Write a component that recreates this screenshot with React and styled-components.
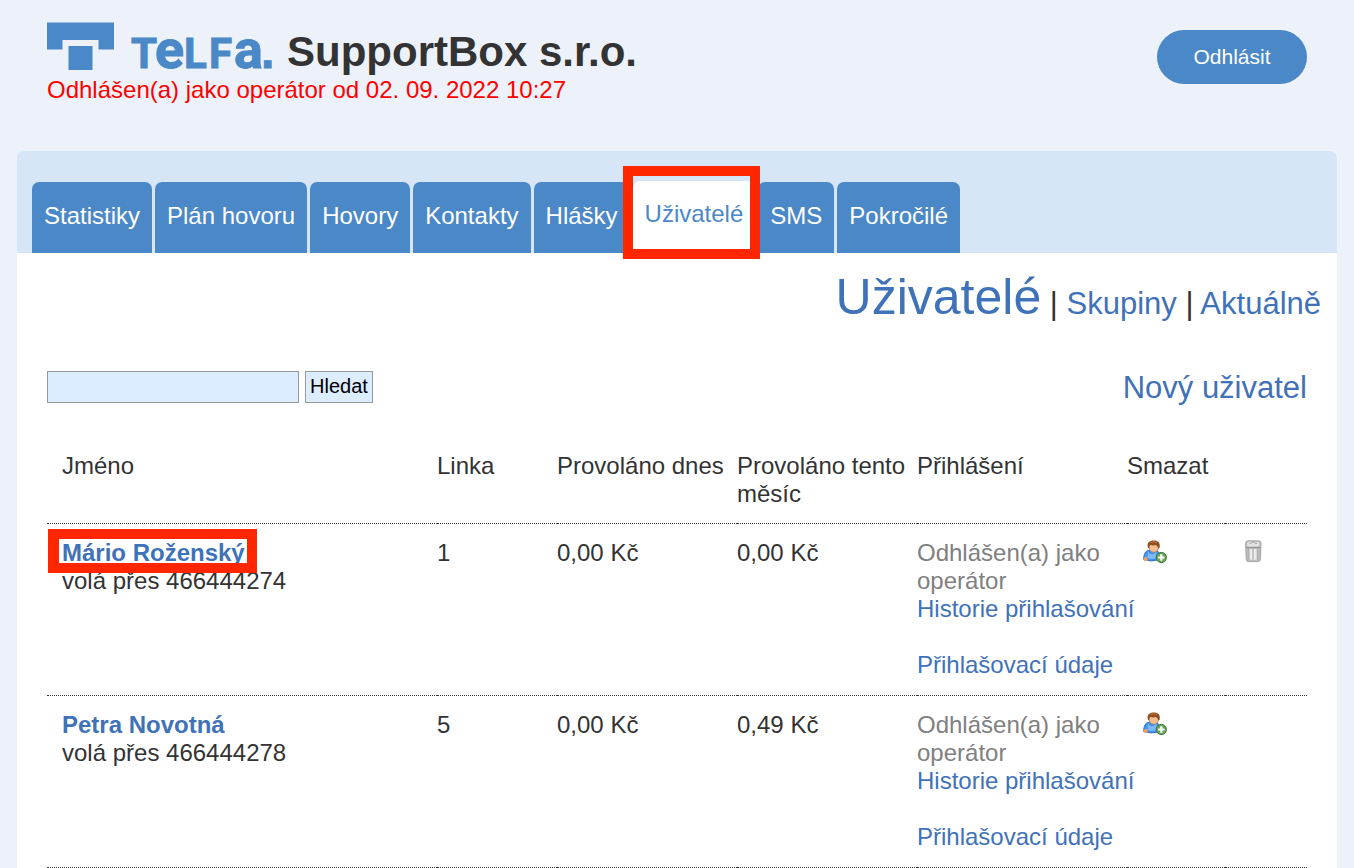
import React, { useState } from "react";
import styled, { createGlobalStyle } from "styled-components";

const tabs = ["Statistiky", "Plán hovoru", "Hovory", "Kontakty", "Hlášky", "Uživatelé", "SMS", "Pokročilé"];

const users = [
  { name: "Mário Roženský", phone: "466444274", line: "1", today: "0,00 Kč", month: "0,00 Kč", marked: true, removable: true },
  { name: "Petra Novotná", phone: "466444278", line: "5", today: "0,00 Kč", month: "0,49 Kč" },
];

const TelfaLogo = () => (
  <LogoSvg width="228" height="48" viewBox="0 0 228 48" role="img" aria-label="Telfa">
    <path d="M0 0.5H67V27.500H51.500V18H15.500V27.500H0Z" />
    <rect x="21.500" y="24" width="24" height="24" />
    <LogoText y="46" fontSize="42">
      <tspan x="84">T</tspan>
      <tspan x="108" fontSize="54">e</tspan>
      <tspan x="137">L</tspan>
      <tspan x="162">F</tspan>
      <tspan x="187" fontSize="54">a</tspan>
      <LogoDot x="214" fontSize="48">.</LogoDot>
    </LogoText>
  </LogoSvg>
);

const AddUserIcon = () => (
  <IconSvg width="24" height="24" viewBox="0 0 24 24" aria-hidden="true">
    <path d="M0.600 19.500C0.600 14 2.500 10.500 6 10.300H12C15.500 10.500 17 13 17 19.500Q8 22.500 0.600 19.500Z" fill="#4292ee" stroke="#2a67bd" strokeWidth="0.8" />
    <path d="M5 11.500Q8.500 17 13.500 11.500L13 18Q8 20 4.500 18Z" fill="#7cb9fa" />
    <path d="M0.600 18.500Q1.500 15.500 4.500 17.500V21H1.200Z" fill="#e9a06c" />
    <ellipse cx="10.800" cy="7" rx="4.800" ry="5.200" fill="#f3bf90" stroke="#b4764a" strokeWidth="0.7" />
    <path d="M4.800 7.500C3.800 2.500 6.500 0.500 10.800 0.500C15.500 0.500 17.600 3 16.600 7.800L15.200 8.500Q14.800 5.500 12.800 5Q9.500 6 7 4.800Q6.200 6.500 6.200 8.500Z" fill="#8f4d20" />
    <path d="M7.500 2.500Q10.500 1 14 2.500" stroke="#c07a45" strokeWidth="1" fill="none" />
    <circle cx="18.300" cy="17.500" r="5.100" fill="#68a558" stroke="#39742e" strokeWidth="1" />
    <path d="M18.300 14.300V20.700M15.100 17.500H21.500" stroke="#fff" strokeWidth="2.200" />
  </IconSvg>
);

const TrashIcon = () => (
  <IconSvg width="24" height="24" viewBox="0 0 24 24" aria-hidden="true">
    <path d="M4.500 3Q4.800 0.800 7 0.800H17.500Q19.800 0.800 20 3L19.500 19.500Q19.300 21.600 17 21.600H7.500Q5.400 21.600 5.200 19.500Z" fill="#bdbdbd" stroke="#999" strokeWidth="0.8" />
    <rect x="6" y="1.800" width="12.500" height="4.600" rx="2" fill="#e2e2e2" />
    <path d="M8.500 3.200H10.500M14 3.200H16M10.800 2.200H13.600" stroke="#8f8f8f" strokeWidth="0.9" />
    <path d="M5 7.600H19.500" stroke="#8f8f8f" strokeWidth="1" />
    <rect x="7.500" y="9" width="9.500" height="11" fill="#d8d8d8" />
    <path d="M10.300 9V19.500M13.800 9V19.500" stroke="#f4f4f4" strokeWidth="1.500" />
    <path d="M7.800 8.500V20M12 9V19.500M16.600 8.500V20" stroke="#a2a2a2" strokeWidth="0.8" />
  </IconSvg>
);

const App = () => {
  const [query, setQuery] = useState("");

  return (
    <Page>
      <GlobalStyle />
      <Header>
        <div>
          <Brand>
            <TelfaLogo />
            <Company>SupportBox s.r.o.</Company>
          </Brand>
          <Status>Odhlášen(a) jako operátor od 02. 09. 2022 10:27</Status>
        </div>
        <LogoutButton type="button">Odhlásit</LogoutButton>
      </Header>
      <Nav>
        {tabs.map((tab) => (
          <Tab key={tab} href="#" $active={tab === "Uživatelé"}>
            {tab}
            {tab === "Uživatelé" && <TabMark />}
          </Tab>
        ))}
      </Nav>
      <Panel>
        <SubNav>
          <SubLink href="#" $current>
            Uživatelé
          </SubLink>
          {" | "}
          <SubLink href="#">Skupiny</SubLink>
          {" | "}
          <SubLink href="#">Aktuálně</SubLink>
        </SubNav>
        <Toolbar>
          <SearchForm onSubmit={(e) => e.preventDefault()}>
            <SearchInput type="text" aria-label="Hledat" value={query} onChange={(e) => setQuery(e.target.value)} />
            <SearchButton type="submit">Hledat</SearchButton>
          </SearchForm>
          <NewUser href="#">Nový uživatel</NewUser>
        </Toolbar>
        <Table>
          <thead>
            <Row>
              <Th>Jméno</Th>
              <Th $width={120}>Linka</Th>
              <Th $width={180}>Provoláno dnes</Th>
              <Th $width={180}>Provoláno tento měsíc</Th>
              <Th $width={210}>Přihlášení</Th>
              <Th $width={98}>Smazat</Th>
              <Th $width={82} />
            </Row>
          </thead>
          <tbody>
            {users.map((user) => (
              <Row key={user.name}>
                <Td>
                  <Name href="#">
                    {user.name}
                    {user.marked && <NameMark />}
                  </Name>
                  <div>volá přes {user.phone}</div>
                </Td>
                <Td>{user.line}</Td>
                <Td>{user.today}</Td>
                <Td>{user.month}</Td>
                <Td>
                  <Muted>Odhlášen(a) jako operátor</Muted>
                  <CellLink href="#">Historie přihlašování</CellLink>
                  <br />
                  <CellLink href="#">Přihlašovací údaje</CellLink>
                </Td>
                <Td>
                  <IconButton type="button" aria-label="Přidat">
                    <AddUserIcon />
                  </IconButton>
                </Td>
                <Td>
                  {user.removable && (
                    <IconButton type="button" aria-label="Smazat">
                      <TrashIcon />
                    </IconButton>
                  )}
                </Td>
              </Row>
            ))}
          </tbody>
        </Table>
      </Panel>
    </Page>
  );
};

const GlobalStyle = createGlobalStyle`
  * {
    box-sizing: border-box;
  }
  body {
    margin: 0;
    background-color: #edf2fa;
    color: #333;
    font-family: "Liberation Sans", Arial, sans-serif;
    font-size: 24px;
    line-height: 28px;
  }
  a {
    color: #3f72b8;
    text-decoration: none;
  }
  button,
  input {
    font-family: inherit;
  }
`;

const Page = styled.div`
  display: flex;
  flex-direction: column;
  min-height: 100vh;
  padding: 0 17px;
`;

const Header = styled.header`
  display: flex;
  justify-content: space-between;
  align-items: flex-start;
  padding: 22px 30px 47px;
`;

const Brand = styled.div`
  display: flex;
  align-items: flex-start;
  gap: 12px;
`;

const LogoSvg = styled.svg`
  display: block;
  overflow: visible;
  fill: #4b88c7;
`;

const LogoText = styled.text`
  font-family: Roboto, sans-serif;
  font-weight: 700;
  stroke: #4b88c7;
  stroke-width: 1px;
`;

const LogoDot = styled.tspan`
  font-family: "Liberation Sans", Arial, sans-serif;
`;

const Company = styled.h1`
  margin: 0;
  padding-top: 5px;
  font-size: 42px;
  line-height: 49px;
`;

const Status = styled.div`
  color: #f00;
`;

const LogoutButton = styled.button`
  cursor: pointer;
  width: 150px;
  height: 54px;
  margin-top: 8px;
  border: 0;
  border-radius: 27px;
  font-size: 21px;
  color: #fff;
  background-color: #4b88c7;
`;

const Nav = styled.nav`
  display: flex;
  align-items: flex-end;
  gap: 3px;
  padding: 30px 15px 0;
  border-radius: 7px 7px 0 0;
  background-color: #d7e6f7;
`;

const Tab = styled.a`
  position: relative;
  padding: ${({ $active }) => ($active ? "19px 12px 25px" : "20px 12px 23px")};
  border-radius: 7px 7px 0 0;
  color: ${({ $active }) => ($active ? "#4b88c7" : "#fff")};
  background-color: ${({ $active }) => ($active ? "#fff" : "#4b88c7")};
`;

const TabMark = styled.span`
  position: absolute;
  z-index: 1;
  top: -15px;
  right: -5px;
  bottom: -6px;
  left: -10px;
  border: 10px solid #ff2600;
`;

const Panel = styled.main`
  flex: 1;
  padding: 14px 30px 0;
  background-color: #fff;
`;

const SubNav = styled.div`
  margin-right: -14px;
  font-size: 31px;
  line-height: 60px;
  text-align: right;
`;

const SubLink = styled.a`
  font-size: ${({ $current }) => ($current ? "50px" : "31px")};
`;

const Toolbar = styled.div`
  display: flex;
  justify-content: space-between;
  align-items: flex-start;
  margin: 37px 0 32px;
`;

const SearchForm = styled.form`
  display: flex;
  gap: 6px;
`;

const SearchInput = styled.input`
  width: 252px;
  height: 32px;
  padding: 0 4px;
  border: 1px solid #999;
  border-radius: 0;
  font-size: 20px;
  background-color: #dcedff;
`;

const SearchButton = styled.button`
  cursor: pointer;
  height: 32px;
  padding: 0 4px 2px;
  border: 1px solid #999;
  font-size: 20px;
  color: #000;
  background-color: #dcedff;
`;

const NewUser = styled.a`
  font-size: 31px;
  line-height: 34px;
`;

const Table = styled.table`
  width: 100%;
  table-layout: fixed;
  border-collapse: collapse;
`;

const Row = styled.tr`
  border-bottom: 1px dotted #333;
`;

const Th = styled.th`
  width: ${({ $width }) => ($width ? `${$width}px` : "auto")};
  padding: 15px 0;
  font-weight: 400;
  text-align: left;
  vertical-align: top;

  &:first-child {
    padding-left: 15px;
  }
`;

const Td = styled.td`
  padding: 15px 0 16px;
  vertical-align: top;

  &:first-child {
    padding-left: 15px;
  }
`;

const Name = styled.a`
  position: relative;
  font-weight: 700;
`;

const NameMark = styled.span`
  position: absolute;
  top: -10px;
  right: -12px;
  bottom: -7px;
  left: -14px;
  border: 10px solid #ff2600;
  border-left-width: 11px;
`;

const Muted = styled.div`
  color: #808080;
`;

const CellLink = styled.a`
  display: block;
  white-space: nowrap;
`;

const IconButton = styled.button`
  cursor: pointer;
  display: block;
  margin: 1px 0 0 16px;
  padding: 0;
  border: 0;
  background: none;
`;

const IconSvg = styled.svg`
  display: block;
`;

export default App;
